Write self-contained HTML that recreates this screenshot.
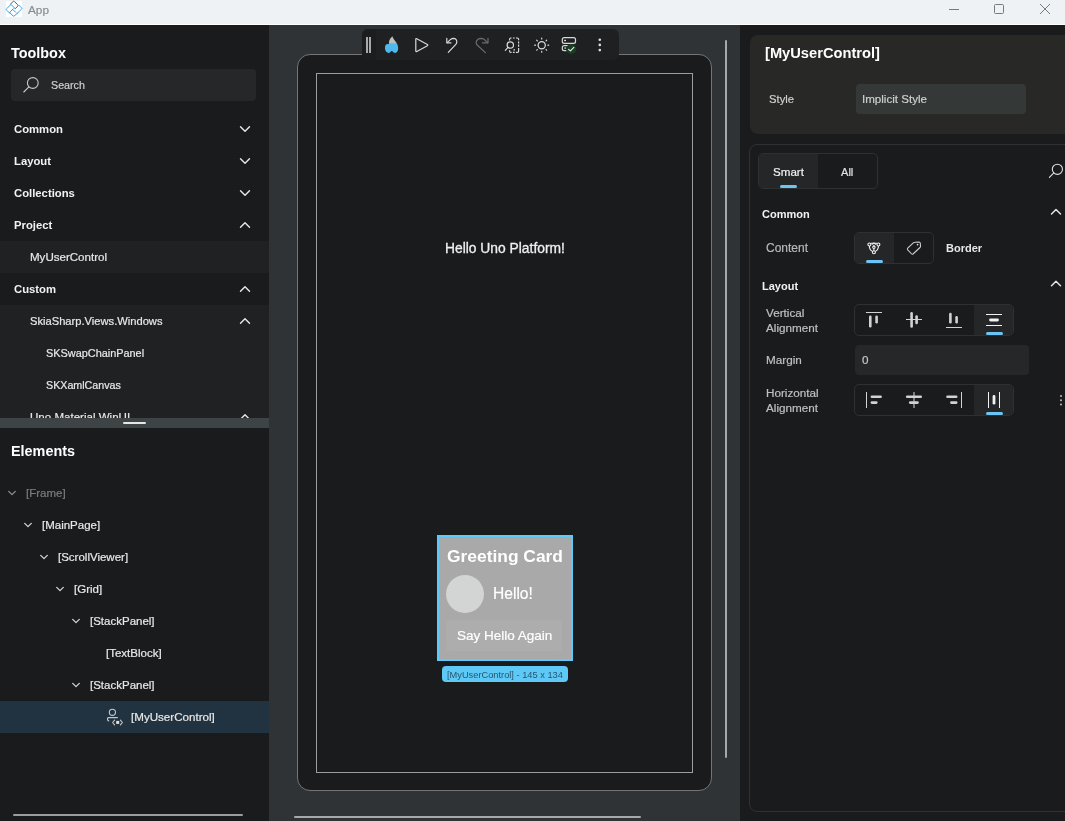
<!DOCTYPE html>
<html><head><meta charset="utf-8"><style>
html,body{margin:0;padding:0;}
body{width:1065px;height:821px;overflow:hidden;position:relative;background:#1a1b1d;font-family:"Liberation Sans",sans-serif;}
.t{position:absolute;line-height:1;white-space:nowrap;-webkit-font-smoothing:antialiased;will-change:transform;}
.r{position:absolute;}
.clip{position:absolute;}
.ov{position:absolute;left:0;top:0;}
</style></head><body>
<div class="r" style="left:0px;top:0px;width:1065px;height:24px;background:#eef2f5;"></div>
<div class="r" style="left:0px;top:24px;width:1065px;height:1px;background:#ffffff;"></div>
<div class="t" style="left:28px;top:5.00px;font-size:11.8px;-webkit-text-stroke:0.2px #8c8c8c;color:#8c8c8c;">App</div>
<div class="r" style="left:0px;top:25px;width:269px;height:796px;background:#1a1b1d;"></div>
<div class="t" style="left:10.5px;top:46.00px;font-size:14.4px;font-weight:700;color:#ffffff;">Toolbox</div>
<div class="r" style="left:11px;top:69px;width:245px;height:32px;background:#262729;border-radius:4px;"></div>
<div class="t" style="left:51px;top:80.00px;font-size:10.7px;-webkit-text-stroke:0.2px #cfcfcf;color:#cfcfcf;">Search</div>
<div class="r" style="left:0px;top:241px;width:269px;height:32px;background:#202123;"></div>
<div class="r" style="left:0px;top:305px;width:269px;height:113px;background:#202123;"></div>
<div class="t" style="left:14px;top:124.00px;font-size:11.3px;font-weight:700;color:#f2f2f2;">Common</div>
<div class="t" style="left:14px;top:156.00px;font-size:11.3px;font-weight:700;color:#f2f2f2;">Layout</div>
<div class="t" style="left:14px;top:188.00px;font-size:11.3px;font-weight:700;color:#f2f2f2;">Collections</div>
<div class="t" style="left:14px;top:220.00px;font-size:11.3px;font-weight:700;color:#f2f2f2;">Project</div>
<div class="t" style="left:14px;top:284.00px;font-size:11.3px;font-weight:700;color:#f2f2f2;">Custom</div>
<div class="t" style="left:30px;top:252.00px;font-size:11.55px;-webkit-text-stroke:0.2px #e8e8e8;color:#e8e8e8;">MyUserControl</div>
<div class="t" style="left:30px;top:316.00px;font-size:11.16px;-webkit-text-stroke:0.2px #e8e8e8;color:#e8e8e8;">SkiaSharp.Views.Windows</div>
<div class="t" style="left:46px;top:348.00px;font-size:10.9px;-webkit-text-stroke:0.2px #e8e8e8;color:#e8e8e8;">SKSwapChainPanel</div>
<div class="t" style="left:46px;top:380.00px;font-size:10.7px;-webkit-text-stroke:0.2px #e8e8e8;color:#e8e8e8;">SKXamlCanvas</div>
<div class="clip" style="left:0;top:400px;width:269px;height:18px;overflow:hidden;">
<div class="t" style="left:30px;top:12.00px;font-size:11.55px;-webkit-text-stroke:0.2px #e8e8e8;color:#e8e8e8;">Uno.Material.WinUI</div>
</div>
<div class="r" style="left:0px;top:418px;width:269px;height:10px;background:#3e4346;"></div>
<div class="r" style="left:123px;top:422px;width:23px;height:2px;background:#e6e6e6;border-radius:1px;"></div>
<div class="t" style="left:10.7px;top:444.00px;font-size:14.4px;font-weight:700;color:#ffffff;">Elements</div>
<div class="r" style="left:0px;top:701px;width:269px;height:32px;background:#213240;"></div>
<div class="t" style="left:26px;top:488.00px;font-size:11.5px;-webkit-text-stroke:0.2px #7d7d7d;color:#7d7d7d;">[Frame]</div>
<div class="t" style="left:42px;top:520.00px;font-size:11.5px;-webkit-text-stroke:0.2px #e8e8e8;color:#e8e8e8;">[MainPage]</div>
<div class="t" style="left:58px;top:552.00px;font-size:11.5px;-webkit-text-stroke:0.2px #e8e8e8;color:#e8e8e8;">[ScrollViewer]</div>
<div class="t" style="left:74px;top:584.00px;font-size:11.5px;-webkit-text-stroke:0.2px #e8e8e8;color:#e8e8e8;">[Grid]</div>
<div class="t" style="left:90px;top:616.00px;font-size:11.5px;-webkit-text-stroke:0.2px #e8e8e8;color:#e8e8e8;">[StackPanel]</div>
<div class="t" style="left:106px;top:648.00px;font-size:11.5px;-webkit-text-stroke:0.2px #e8e8e8;color:#e8e8e8;">[TextBlock]</div>
<div class="t" style="left:90px;top:680.00px;font-size:11.5px;-webkit-text-stroke:0.2px #e8e8e8;color:#e8e8e8;">[StackPanel]</div>
<div class="t" style="left:131px;top:711.00px;font-size:11.6px;-webkit-text-stroke:0.2px #e8e8e8;color:#e8e8e8;">[MyUserControl]</div>
<div class="r" style="left:13px;top:814px;width:230px;height:2px;background:#9c9c9c;border-radius:1px;"></div>
<div class="r" style="left:269px;top:25px;width:471px;height:796px;background:#2f3336;"></div>
<div class="r" style="left:297px;top:54px;width:415px;height:737px;background:#1a1b1d;border:1px solid #737577;border-radius:13px;box-sizing:border-box;"></div>
<div class="r" style="left:316px;top:73px;width:377px;height:700px;background:transparent;border:1px solid #9d9d9d;box-sizing:border-box;"></div>
<div class="r" style="left:725px;top:40px;width:2px;height:718px;background:#a8a8a8;border-radius:1px;"></div>
<div class="r" style="left:294px;top:816px;width:347px;height:2px;background:#a8a8a8;border-radius:1px;"></div>
<div class="r" style="left:362px;top:29px;width:257px;height:31px;background:#1f2022;border-radius:6px;"></div>
<div class="r" style="left:362px;top:29px;width:14px;height:31px;background:#1c1d1f;border-radius:6px 0 0 6px;"></div>
<div class="t" style="left:444.5px;top:242.00px;font-size:13.84px;-webkit-text-stroke:0.2px #f0f0f0;color:#f0f0f0;-webkit-text-stroke:0.3px #f0f0f0;">Hello Uno Platform!</div>
<div class="r" style="left:437px;top:535px;width:136px;height:126px;background:#a9a9a9;border:2px solid #5ccbfa;box-sizing:border-box;"></div>
<div class="t" style="left:447px;top:548.00px;font-size:17.4px;font-weight:700;color:#ffffff;">Greeting Card</div>
<div class="r" style="left:446px;top:575px;width:38px;height:38px;background:#d3d4d4;border-radius:50%;"></div>
<div class="t" style="left:493px;top:586.00px;font-size:15.6px;-webkit-text-stroke:0.2px #ffffff;color:#ffffff;">Hello!</div>
<div class="r" style="left:446px;top:620px;width:116px;height:31px;background:#adadad;border-radius:4px;"></div>
<div class="t" style="left:457px;top:629.00px;font-size:13.5px;-webkit-text-stroke:0.2px #ffffff;color:#ffffff;">Say Hello Again</div>
<div class="r" style="left:442px;top:666px;width:126px;height:16px;background:#5ec8f7;border-radius:4px;"></div>
<div class="t" style="left:447px;top:671.00px;font-size:9.28px;-webkit-text-stroke:0.2px #25576f;color:#25576f;-webkit-text-stroke:0;">[MyUserControl] - 145 x 134</div>
<div class="r" style="left:740px;top:25px;width:325px;height:796px;background:#1a1b1d;"></div>
<div class="r" style="left:750px;top:35px;width:330px;height:99px;background:#282827;border-radius:8px;"></div>
<div class="t" style="left:765.3px;top:46.00px;font-size:14.68px;font-weight:700;color:#ffffff;">[MyUserControl]</div>
<div class="t" style="left:768.7px;top:94.00px;font-size:11.25px;-webkit-text-stroke:0.2px #cfcfcf;color:#cfcfcf;">Style</div>
<div class="r" style="left:856px;top:84px;width:170px;height:30px;background:#343837;border-radius:4px;"></div>
<div class="t" style="left:862px;top:94.00px;font-size:11.58px;-webkit-text-stroke:0.2px #cfcfcf;color:#cfcfcf;">Implicit Style</div>
<div class="r" style="left:749px;top:144px;width:330px;height:668px;background:transparent;border:1px solid #2e3033;border-radius:8px;box-sizing:border-box;"></div>
<div class="r" style="left:758px;top:153px;width:120px;height:36px;background:transparent;border:1px solid #2e3032;border-radius:5px;box-sizing:border-box;"></div>
<div class="r" style="left:759px;top:154px;width:59px;height:34px;background:#242628;border-radius:4px 0 0 4px;"></div>
<div class="t" style="left:773px;top:166.00px;font-size:11.62px;-webkit-text-stroke:0.2px #f0f0f0;color:#f0f0f0;">Smart</div>
<div class="t" style="left:841px;top:167.00px;font-size:11.07px;-webkit-text-stroke:0.2px #e0e0e0;color:#e0e0e0;">All</div>
<div class="r" style="left:780px;top:185px;width:17px;height:3px;background:#6cc4f4;border-radius:1.5px;"></div>
<div class="t" style="left:762.3px;top:209.00px;font-size:11.0px;font-weight:700;color:#f2f2f2;">Common</div>
<div class="t" style="left:766px;top:242.00px;font-size:12.0px;-webkit-text-stroke:0.2px #b8b8b8;color:#b8b8b8;">Content</div>
<div class="r" style="left:854px;top:232px;width:80px;height:32px;background:transparent;border:1px solid #2e3032;border-radius:5px;box-sizing:border-box;"></div>
<div class="r" style="left:855px;top:233px;width:39px;height:30px;background:#242628;border-radius:4px 0 0 4px;"></div>
<div class="r" style="left:866px;top:260px;width:17px;height:3px;background:#6cc4f4;border-radius:1.5px;"></div>
<div class="t" style="left:946px;top:243.00px;font-size:11.0px;font-weight:700;color:#e8e8e8;">Border</div>
<div class="t" style="left:762.4px;top:281.00px;font-size:11.0px;font-weight:700;color:#f2f2f2;">Layout</div>
<div class="t" style="left:766px;top:307.00px;font-size:11.7px;-webkit-text-stroke:0.2px #c0c0c0;color:#c0c0c0;">Vertical</div>
<div class="t" style="left:766px;top:322.00px;font-size:11.7px;-webkit-text-stroke:0.2px #c0c0c0;color:#c0c0c0;">Alignment</div>
<div class="r" style="left:854px;top:304px;width:160px;height:32px;background:transparent;border:1px solid #2e3032;border-radius:5px;box-sizing:border-box;"></div>
<div class="r" style="left:974px;top:305px;width:39px;height:30px;background:#242628;border-radius:0 4px 4px 0;"></div>
<div class="r" style="left:986px;top:332px;width:17px;height:3px;background:#6cc4f4;border-radius:1.5px;"></div>
<div class="t" style="left:766px;top:354.00px;font-size:11.7px;-webkit-text-stroke:0.2px #c0c0c0;color:#c0c0c0;">Margin</div>
<div class="r" style="left:855px;top:345px;width:174px;height:30px;background:#262729;border-radius:4px;"></div>
<div class="t" style="left:862px;top:354.00px;font-size:11.7px;-webkit-text-stroke:0.2px #c8c8c8;color:#c8c8c8;">0</div>
<div class="t" style="left:766px;top:387.00px;font-size:11.7px;-webkit-text-stroke:0.2px #c0c0c0;color:#c0c0c0;">Horizontal</div>
<div class="t" style="left:766px;top:402.00px;font-size:11.7px;-webkit-text-stroke:0.2px #c0c0c0;color:#c0c0c0;">Alignment</div>
<div class="r" style="left:854px;top:384px;width:160px;height:32px;background:transparent;border:1px solid #2e3032;border-radius:5px;box-sizing:border-box;"></div>
<div class="r" style="left:974px;top:385px;width:39px;height:30px;background:#242628;border-radius:0 4px 4px 0;"></div>
<div class="r" style="left:986px;top:412px;width:17px;height:3px;background:#6cc4f4;border-radius:1.5px;"></div>
<svg class="ov" width="1065" height="821" viewBox="0 0 1065 821">
<path d="M240.5 126.7 L245 131.3 L249.5 126.7" fill="none" stroke="#e6e6e6" stroke-width="1.4" stroke-linecap="round" stroke-linejoin="round"/>
<path d="M240.5 158.7 L245 163.3 L249.5 158.7" fill="none" stroke="#e6e6e6" stroke-width="1.4" stroke-linecap="round" stroke-linejoin="round"/>
<path d="M240.5 190.7 L245 195.3 L249.5 190.7" fill="none" stroke="#e6e6e6" stroke-width="1.4" stroke-linecap="round" stroke-linejoin="round"/>
<path d="M240.5 227.3 L245 222.7 L249.5 227.3" fill="none" stroke="#e6e6e6" stroke-width="1.4" stroke-linecap="round" stroke-linejoin="round"/>
<path d="M240.5 291.3 L245 286.7 L249.5 291.3" fill="none" stroke="#e6e6e6" stroke-width="1.4" stroke-linecap="round" stroke-linejoin="round"/>
<path d="M240.5 323.3 L245 318.7 L249.5 323.3" fill="none" stroke="#e6e6e6" stroke-width="1.4" stroke-linecap="round" stroke-linejoin="round"/>
<defs><clipPath id="clipL"><rect x="0" y="400" width="269" height="18"/></clipPath></defs><g clip-path="url(#clipL)">
<path d="M240.5 419.3 L245 414.7 L249.5 419.3" fill="none" stroke="#e6e6e6" stroke-width="1.4" stroke-linecap="round" stroke-linejoin="round"/>
</g>
<path d="M8.7 491.35 L12 494.65 L15.3 491.35" fill="none" stroke="#909090" stroke-width="1.3" stroke-linecap="round" stroke-linejoin="round"/>
<path d="M24.7 523.35 L28 526.65 L31.3 523.35" fill="none" stroke="#d4d4d4" stroke-width="1.3" stroke-linecap="round" stroke-linejoin="round"/>
<path d="M40.7 555.35 L44 558.65 L47.3 555.35" fill="none" stroke="#d4d4d4" stroke-width="1.3" stroke-linecap="round" stroke-linejoin="round"/>
<path d="M56.7 587.35 L60 590.65 L63.3 587.35" fill="none" stroke="#d4d4d4" stroke-width="1.3" stroke-linecap="round" stroke-linejoin="round"/>
<path d="M72.7 619.35 L76 622.65 L79.3 619.35" fill="none" stroke="#d4d4d4" stroke-width="1.3" stroke-linecap="round" stroke-linejoin="round"/>
<path d="M72.7 683.35 L76 686.65 L79.3 683.35" fill="none" stroke="#d4d4d4" stroke-width="1.3" stroke-linecap="round" stroke-linejoin="round"/>
<path d="M1051.5 214.10000000000002 L1056 209.5 L1060.5 214.10000000000002" fill="none" stroke="#e6e6e6" stroke-width="1.4" stroke-linecap="round" stroke-linejoin="round"/>
<path d="M1051.5 285.8 L1056 281.2 L1060.5 285.8" fill="none" stroke="#e6e6e6" stroke-width="1.4" stroke-linecap="round" stroke-linejoin="round"/>
<rect x="6" y="1" width="16" height="16" fill="#ffffff"/>
<g fill="none" stroke-width="1" stroke-linejoin="round" stroke-linecap="round"><path d="M10.2 4.4 L13.2 1.5 Q13.8 0.9 14.4 1.5 L17.8 4.9 Q18.4 5.5 17.8 6.1 L15.2 8.7" stroke="#5a5a5a"/><path d="M15.2 8.7 L11.7 5 Q11.1 4.4 10.5 5 L6.4 8.9 Q5.8 9.5 6.4 10.1 L9.8 13.2" stroke="#3aa8ec"/><path d="M18.8 5.1 L21.6 7.9 Q22.2 8.5 21.6 9.1 L17.4 13.2 M13.2 9.8 L15.6 12.3" stroke="#3aa8ec"/><path d="M13.3 8.8 L10.2 11.8 Q9.6 12.4 10.2 13 L13.2 16 Q13.8 16.6 14.4 16 L17.6 12.8" stroke="#3596da"/></g>
<g stroke="#7a7a7a" stroke-width="1" fill="none"><path d="M949 9.5 H959"/><rect x="994.5" y="4.5" width="9" height="9" rx="1"/><path d="M1040 4 L1050 14 M1050 4 L1040 14"/></g>
<g stroke="#c8c8c8" stroke-width="1.1" fill="none" stroke-linecap="round"><circle cx="32.8" cy="83" r="5.4"/><path d="M28.9 86.9 L23.8 92"/></g>
<rect x="366" y="37" width="2" height="16" fill="#a8a8a8"/><rect x="369" y="37" width="2" height="16" fill="#a8a8a8"/>
<defs><linearGradient id="fl" x1="0" y1="0" x2="0" y2="1"><stop offset="0" stop-color="#bdbdbd"/><stop offset="0.36" stop-color="#c0c0c0"/><stop offset="0.42" stop-color="#8ab8d8"/><stop offset="0.46" stop-color="#4fb8ec"/><stop offset="1" stop-color="#4db9ee"/></linearGradient></defs>
<path d="M392.3 36.2 C391 37.8 389 39.5 389 42.3 C389 43.3 389.1 43.9 388.5 44.2 C387.6 43.7 386.4 44 385.6 45 C384.6 46.5 384.7 50 386.2 51.8 C387 52.8 388.3 53.2 389.5 52.8 C390.3 52.5 390.7 51 391.7 51 C392.7 51 393.3 52.5 394.2 52.8 C395.5 53.2 397 52.5 397.6 51 C398.5 49 398.3 46 397.2 44 C396 41.5 393.5 39.5 392.3 36.2 Z" fill="url(#fl)"/>
<path d="M415.8 39.3 Q415.8 38.2 416.8 38.7 L427.4 44.5 Q428.2 45.1 427.4 45.7 L416.8 51.5 Q415.8 52 415.8 50.9 Z" fill="none" stroke="#d8d8d8" stroke-width="1.2" stroke-linejoin="round"/>
<g fill="none" stroke="#d8d8d8" stroke-width="1.2" stroke-linecap="round" stroke-linejoin="round"><path d="M447.2 42.6 L450.6 39.4 Q451.9 38.4 453.4 38.4 Q456.8 38.6 456.8 42 Q456.8 43.5 455.6 44.6 L448.3 52.3"/><path d="M446.8 38.4 V42.8 H451"/></g>
<g fill="none" stroke="#6c6c6c" stroke-width="1.2" stroke-linecap="round" stroke-linejoin="round"><path d="M487.6 42.6 L484 39.3 Q482.6 38.4 481 38.4 Q477 38.6 476.2 42.2 Q476 44 477.4 45.2 L485.4 52.6"/><path d="M488 38.4 V42.8 H482.4"/></g>
<g fill="none" stroke="#d8d8d8" stroke-width="1.2" stroke-linecap="butt"><path d="M509.6 40.4 V39.2 Q509.6 38 510.8 38 H511.6 M512.9 38 H514.7 M515.9 38 H517.4 Q518.6 38 518.6 39.2 V40.3 M518.6 41.4 V43.6 M518.6 44.6 V46.8 M518.6 47.9 V51.2 Q518.6 52.4 517.4 52.4 H515.9 M514.7 52.4 H512.9 M511.6 52.4 H510.8 Q509.6 52.4 509.6 51.2 V50.2"/><circle cx="510.3" cy="45" r="3.2"/><path d="M508 47.4 L505.3 50.3" stroke-linecap="round"/><path d="M513.4 49.9 H515"/></g>
<g fill="none" stroke="#e0e0e0" stroke-width="1.2" stroke-linecap="round"><circle cx="541.7" cy="45.2" r="3.6"/><path d="M547.90 45.20 L548.70 45.20"/><path d="M546.08 49.58 L546.65 50.15"/><path d="M541.70 51.40 L541.70 52.20"/><path d="M537.32 49.58 L536.75 50.15"/><path d="M535.50 45.20 L534.70 45.20"/><path d="M537.32 40.82 L536.75 40.25"/><path d="M541.70 39.00 L541.70 38.20"/><path d="M546.08 40.82 L546.65 40.25"/></g>
<g fill="none" stroke="#d8d8d8" stroke-width="1.2"><rect x="562.3" y="37.6" width="13.2" height="5.8" rx="1.9"/><path d="M570 45.6 H564.2 Q562.3 45.6 562.3 47.5 V48.7 Q562.3 50.6 564.2 50.6 H566.6"/></g><rect x="564.2" y="39.8" width="1.8" height="1.4" fill="#e0e0e0"/><rect x="564.4" y="47.3" width="1.5" height="1.5" fill="#d0d0d0"/><circle cx="571.2" cy="49" r="5.1" fill="#1a3f20"/><path d="M568.6 49.3 L570.4 50.9 L573.9 47.4" fill="none" stroke="#f0f0f0" stroke-width="1.05" stroke-linecap="round" stroke-linejoin="round"/>
<circle cx="599.8" cy="39.8" r="1.3" fill="#e0e0e0"/><circle cx="599.8" cy="44.9" r="1.3" fill="#e0e0e0"/><circle cx="599.8" cy="50.1" r="1.3" fill="#e0e0e0"/>
<g fill="none" stroke="#c8c8c8" stroke-width="1.1" stroke-linecap="round" stroke-linejoin="round"><circle cx="112.4" cy="712.3" r="3.1"/><path d="M117.4 717.6 H108.6 Q107.4 717.6 107.4 719 Q107.4 720.2 108.8 721"/><path d="M114.6 720.2 L112.6 722.5 L114.6 724.8 M120.4 720.2 L122.4 722.5 L120.4 724.8"/></g><rect x="116.2" y="720.9" width="3" height="3" fill="#e0e0e0"/>
<g stroke="#e0e0e0" stroke-width="1.1" fill="none" stroke-linecap="round"><circle cx="1057.4" cy="169.3" r="5.1"/><path d="M1053.8 172.9 L1049.4 177.4"/></g>
<g fill="none" stroke="#f2f2f2" stroke-width="1.1"><circle cx="869.4" cy="244.5" r="1.5"/><circle cx="878.4" cy="244.5" r="1.5"/><circle cx="873.9" cy="252.3" r="1.5"/><circle cx="873.9" cy="247.3" r="1.2"/><path d="M871.9 244.6 Q873.9 241.4 875.9 244.6"/><path d="M870.9 243.3 H876.9 M869.5 246 V247.6 Q869.8 250 872.5 251.6 M878.3 246 V247.6 Q878 250 875.3 251.6 M873.9 248.5 V250.8 M873.9 244.8 V246.1"/></g>
<g fill="none" stroke="#d0d0d0" stroke-width="1.05" stroke-linejoin="round"><path d="M907.7 248.1 L913.3 242.8 Q914 242.2 914.8 242.2 L919 242 Q920.2 242 920.3 243.2 L920.5 246.2 Q920.5 247 920 247.5 L913 254 Q912.3 254.6 911.7 254 L907.7 249.8 Q907 249 907.7 248.1 Z"/></g><circle cx="917.6" cy="244.6" r="0.9" fill="#d8d8d8"/>
<path d="M866 312.5 L882 312.5" stroke="#d2d2d2" stroke-width="1.05"/><path d="M870.3 316.8 V326.3" stroke="#d2d2d2" stroke-width="2.6" stroke-linecap="round"/><path d="M876.6 316.8 V322.2" stroke="#d2d2d2" stroke-width="2.6" stroke-linecap="round"/>
<path d="M906 319.5 L922 319.5" stroke="#d2d2d2" stroke-width="1.05"/><path d="M911.6 313.2 V326.5" stroke="#d2d2d2" stroke-width="2.6" stroke-linecap="round"/><path d="M916.6 316.6 V323" stroke="#d2d2d2" stroke-width="2.6" stroke-linecap="round"/>
<path d="M946 327.5 L962 327.5" stroke="#d2d2d2" stroke-width="1.05"/><path d="M950.4 314 V322.2" stroke="#d2d2d2" stroke-width="2.6" stroke-linecap="round"/><path d="M956.6 317.3 V322.2" stroke="#d2d2d2" stroke-width="2.6" stroke-linecap="round"/>
<path d="M986 314.5 L1002 314.5" stroke="#f2f2f2" stroke-width="1.05"/><path d="M986 325.5 L1002 325.5" stroke="#f2f2f2" stroke-width="1.05"/><path d="M990.5 320 H997.5" stroke="#f2f2f2" stroke-width="2.8" stroke-linecap="round"/>
<path d="M866.5 392 L866.5 408" stroke="#d2d2d2" stroke-width="1.05"/><path d="M871.9 396.8 H880.6" stroke="#d2d2d2" stroke-width="2.6" stroke-linecap="round"/><path d="M871.9 402.6 H876.3" stroke="#d2d2d2" stroke-width="2.6" stroke-linecap="round"/>
<path d="M914 392 L914 408" stroke="#d2d2d2" stroke-width="1.05"/><path d="M907.2 396.8 H920.7" stroke="#d2d2d2" stroke-width="2.6" stroke-linecap="round"/><path d="M910.2 402.6 H917.5" stroke="#d2d2d2" stroke-width="2.6" stroke-linecap="round"/>
<path d="M961.5 392 L961.5 408" stroke="#d2d2d2" stroke-width="1.05"/><path d="M947.5 396.8 H956.2" stroke="#d2d2d2" stroke-width="2.6" stroke-linecap="round"/><path d="M951.4 402.6 H956.2" stroke="#d2d2d2" stroke-width="2.6" stroke-linecap="round"/>
<path d="M988.5 392 L988.5 408" stroke="#f2f2f2" stroke-width="1.05"/><path d="M999.5 392 L999.5 408" stroke="#f2f2f2" stroke-width="1.05"/><path d="M994 396.4 V403.2" stroke="#f2f2f2" stroke-width="2.8" stroke-linecap="round"/>
<circle cx="1061" cy="396" r="1" fill="#bdbdbd"/><circle cx="1061" cy="400.2" r="1" fill="#bdbdbd"/><circle cx="1061" cy="404.4" r="1" fill="#bdbdbd"/>
</svg>
</body></html>
